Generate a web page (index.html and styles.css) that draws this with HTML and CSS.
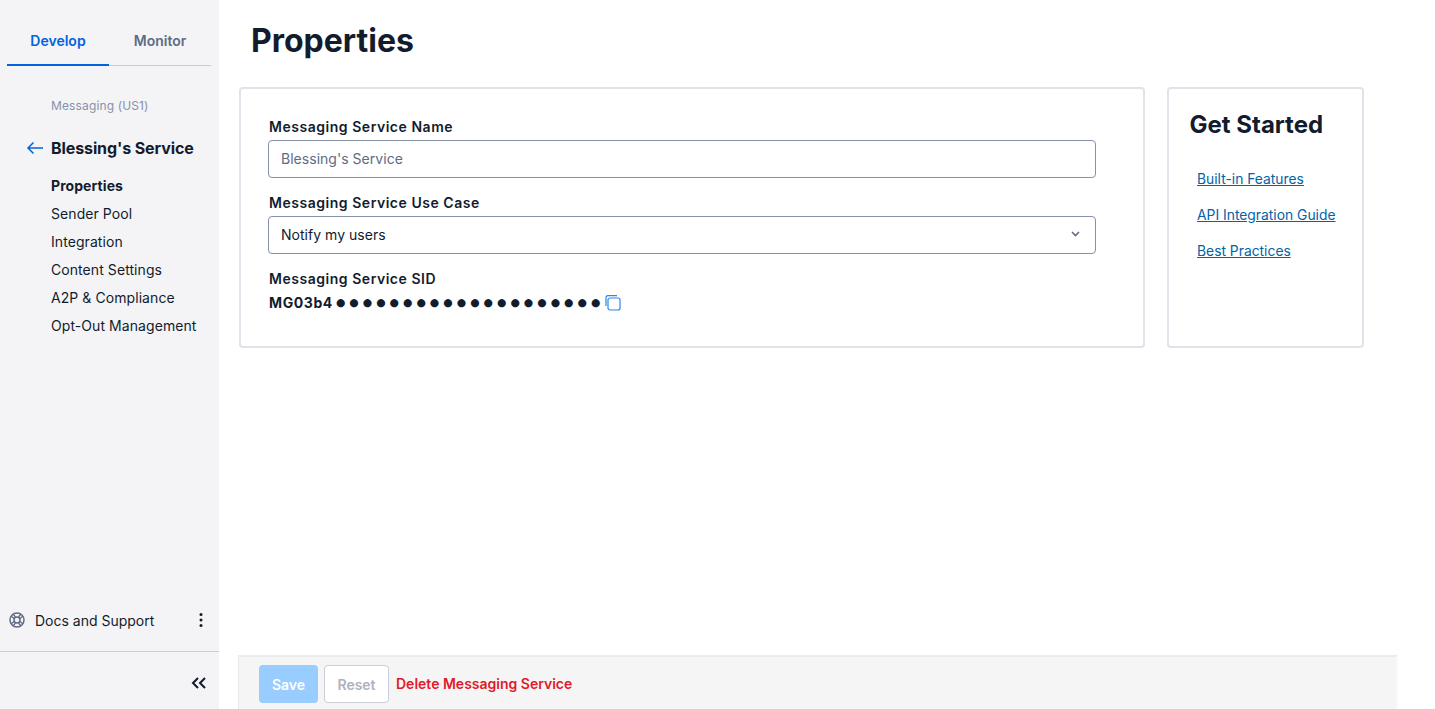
FILE: index.html
```html
<!DOCTYPE html>
<html lang="en">
<head>
<meta charset="utf-8">
<title>Properties</title>
<link rel="stylesheet" href="styles.css">
</head>
<body>
<div class="app">
  <aside class="sidebar">
    <div class="tabs">
      <div class="tab tab-active">Develop</div>
      <div class="tab">Monitor</div>
    </div>
    <div class="crumb">Messaging (US1)</div>
    <div class="svc">
      <svg class="back" width="18" height="14" viewBox="0 0 18 14" fill="none" stroke="#0263e0" stroke-width="1.5"><path d="M17 7H2M7.500 1.500 2 7l5.500 5.500"/></svg>
      <span>Blessing's Service</span>
    </div>
    <nav class="nav">
      <a class="nav-item nav-current">Properties</a>
      <a class="nav-item">Sender Pool</a>
      <a class="nav-item">Integration</a>
      <a class="nav-item">Content Settings</a>
      <a class="nav-item">A2P &amp; Compliance</a>
      <a class="nav-item">Opt-Out Management</a>
    </nav>
    <div class="docs">
      <svg width="16" height="16" viewBox="0 0 16 16" fill="none" stroke="#606b85" stroke-width="1.500"><circle cx="8" cy="8" r="7"/><circle cx="8" cy="8" r="3"/><path d="M4 2 6.500 5M2 4 5 6.500M12 2 9.500 5M14 4 11 6.500M4 14 6.500 11M2 12 5 9.500M12 14 9.500 11M14 12 11 9.500" stroke-width="1.200"/></svg>
      <span class="docs-label">Docs and Support</span>
      <svg width="4" height="16" viewBox="0 0 4 16" fill="#121c2d"><circle cx="2" cy="2.500" r="1.500"/><circle cx="2" cy="8" r="1.500"/><circle cx="2" cy="13.500" r="1.500"/></svg>
    </div>
    <div class="collapse">
      <svg width="16" height="12" viewBox="0 0 16 12" fill="none" stroke="#121c2d" stroke-width="2"><path d="M7 1 2 6l5 5M14 1 9 6l5 5"/></svg>
    </div>
  </aside>
  <main class="main">
    <h1 class="title">Properties</h1>
    <div class="cards">
      <section class="card form-card">
        <label class="label">Messaging Service Name</label>
        <div class="field placeholder">Blessing's Service</div>
        <label class="label">Messaging Service Use Case</label>
        <div class="field select">
          <span>Notify my users</span>
          <svg width="9" height="6" viewBox="0 0 9 6" fill="none" stroke="#606b85" stroke-width="1.600"><path d="M1 1l3.500 3.500L8 1"/></svg>
        </div>
        <label class="label">Messaging Service SID</label>
        <div class="sid">
          <span>MG03b4</span><span class="dots">●●●●●●●●●●●●●●●●●●●●</span>
          <svg width="16" height="16" viewBox="0 0 16 16" fill="none" stroke="#2f86e8" stroke-width="1.200"><path d="M1 11V2.500a1.800 1.800 0 0 1 1.800-1.800H12"/><rect x="3" y="3" width="12" height="12" rx="2"/></svg>
        </div>
      </section>
      <section class="card side-card">
        <h2 class="side-title">Get Started</h2>
        <a class="link">Built-in Features</a>
        <a class="link">API Integration Guide</a>
        <a class="link">Best Practices</a>
      </section>
    </div>
    <footer class="footer">
      <button class="btn btn-save">Save</button>
      <button class="btn btn-reset">Reset</button>
      <span class="delete">Delete Messaging Service</span>
    </footer>
  </main>
</div>
</body>
</html>
```
FILE: styles.css
```css
* { box-sizing: border-box; }
html, body { margin: 0; height: 100%; overflow: hidden; }
body { background: #fff; color: #121c2d; font-family: Inter, "Liberation Sans", sans-serif; font-size: 14px; }
.app { display: flex; height: 709px; }
.sidebar { width: 219px; flex: none; background: #f4f4f6; display: flex; flex-direction: column; }
.tabs { display: flex; margin: 22px 8px 0 7px; height: 44px; border-bottom: 1px solid #c8ccd6; }
.tab { width: 102px; height: 44px; display: flex; align-items: center; justify-content: center; font-weight: 600; font-size: 14px; color: #606b85; padding-bottom: 6px; border-bottom: 2px solid transparent; }
.tab-active { color: #0263e0; border-bottom-color: #0263e0; }
.crumb { margin: 31px 0 0 51px; font-size: 12px; line-height: 18px; color: #8891aa; letter-spacing: .13px; }
.svc { display: flex; align-items: center; margin: 22px 0 0 26px; height: 22px; font-size: 16px; font-weight: 700; gap: 7px; letter-spacing: -.1px; }
.nav { display: flex; flex-direction: column; margin: 13px 0 0 51px; }
.nav-item { height: 28px; line-height: 28px; font-size: 14px; color: #121c2d; letter-spacing: .07px; }
.nav-current { font-weight: 700; }
.docs { margin-top: auto; height: 40px; display: flex; align-items: center; padding: 0 16px 0 9px; gap: 10px; }
.docs-label { flex: 1; }
.collapse { margin-top: 11px; height: 58px; border-top: 1px solid #c8ccd6; display: flex; justify-content: flex-end; align-items: center; padding: 4px 12px 0 0; }
.main { flex: 1; min-width: 0; display: flex; flex-direction: column; padding-left: 19px; }
.title { margin: 19px 0 0 13px; font-size: 32px; line-height: 44px; font-weight: 700; }
.cards { display: flex; gap: 22px; margin: 24px 0 0 1px; }
.card { height: 261px; border: 2px solid #e1e3ea; border-radius: 4px; background: #fff; }
.form-card { width: 906px; padding: 28px 47px 0 28px; }
.side-card { width: 197px; padding: 20px 0 0 20.500px; }
.label { display: block; font-size: 14px; font-weight: 600; line-height: 20px; letter-spacing: .53px; }
.field { height: 38px; margin: 3px 0 15px -1px; border: 1px solid #8891aa; border-radius: 4px; display: flex; align-items: center; padding: 0 12px 2px; font-size: 14px; letter-spacing: .03px; }
.placeholder { color: #606b85; }
.select { justify-content: space-between; padding-right: 15px; margin-bottom: 15px; }
.sid { display: flex; align-items: center; height: 20px; margin-top: 3px; font-size: 14px; font-weight: 700; letter-spacing: .6px; }
.dots { font-size: 10.800px; letter-spacing: 4px; margin: 0 1px 0 3px; font-family: "DejaVu Sans", sans-serif; white-space: nowrap; }
.sid svg { margin-top: 1px; }
.side-title { margin: 0 0 28px; font-size: 24px; line-height: 32px; font-weight: 700; }
.link { display: block; margin-left: 7.500px; height: 36px; line-height: 20px; font-size: 13.850px; color: #0263a8; text-decoration: underline; }
.footer { margin: auto 0 0 0; width: 1160px; height: 54px; background: #f5f5f5; border-top: 2px solid #ececec; border-left: 1px solid #e8e8e8; border-right: 2px solid #f9f9f9; display: flex; align-items: flex-start; padding: 8px 0 0 20px; gap: 6px; }
.btn { height: 38px; border-radius: 4px; font-family: inherit; font-size: 14px; font-weight: 600; padding: 0; }
.btn-save { width: 59px; background: #99cdff; border: 0; color: #fff; }
.btn-reset { width: 65px; background: #fff; border: 1px solid #cacdd8; color: #aeb2c1; }
.delete { line-height: 38px; color: #e01a2b; font-weight: 600; font-size: 14px; margin-left: 1px; }
```
